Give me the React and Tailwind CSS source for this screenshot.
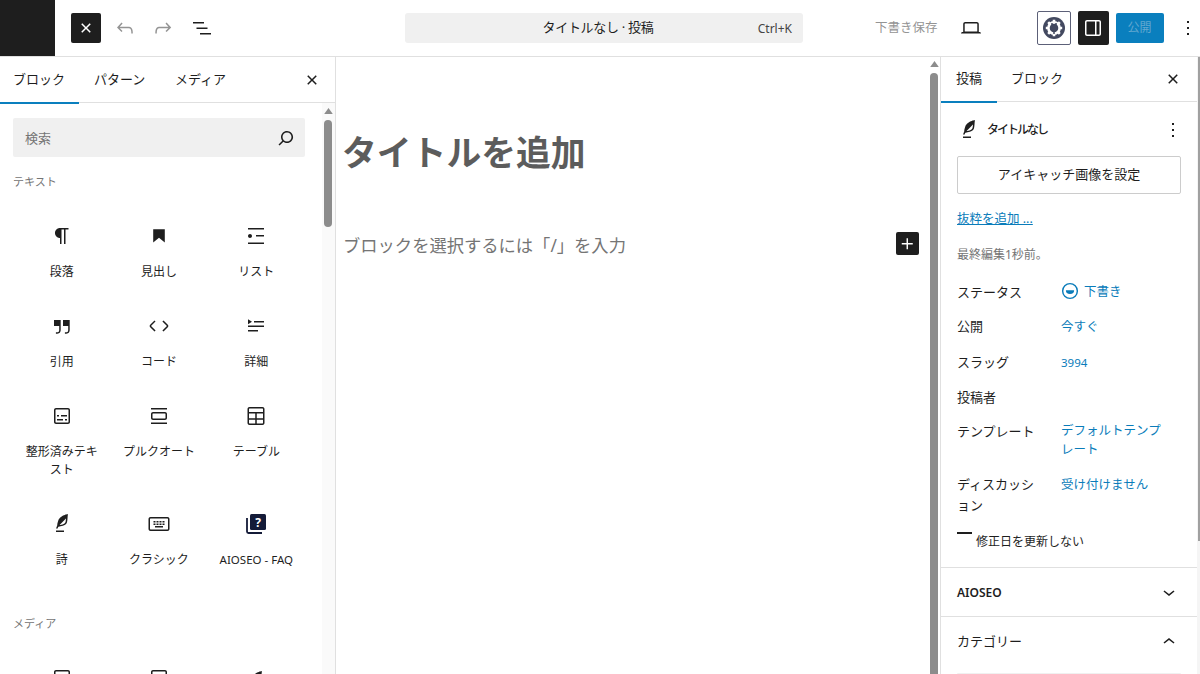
const P = {
  close: "M12 13.06l3.712 3.713 1.061-1.06L13.061 12l3.712-3.712-1.06-1.06L12 10.938 8.288 7.227l-1.061 1.06L10.939 12l-3.712 3.712 1.06 1.061L12 13.061z",
  undo: "M18.3 11.7c-.6-.6-1.4-.9-2.3-.9H6.7l2.9-3.3-1.1-1-4.5 5L8.5 16l1-1-2.7-2.7H16c.5 0 .9.2 1.3.5 1 1 1 3.4 1 4.5v.3h1.5v-.2c0-1.5 0-4.3-1.5-5.7z",
  redo: "M15.6 6.5l-1.1 1 2.9 3.3H8c-.9 0-1.7.3-2.3.9-1.4 1.5-1.4 4.2-1.4 5.6v.2h1.5v-.3c0-1.1 0-3.5 1-4.5.3-.3.7-.5 1.3-.5h9.2L14.5 15l1.1 1.1 4.6-4.6-4.6-5z",
  listView: "M3 6h11v1.5H3V6Zm3.5 5.5h11V13h-11v-1.5ZM21 17H10v1.5h11V17Z",
  search: "M13 5c-3.3 0-6 2.7-6 6 0 1.4.5 2.7 1.3 3.7l-3.8 3.8 1.1 1.1 3.8-3.8c1 .8 2.3 1.3 3.7 1.3 3.3 0 6-2.7 6-6S16.3 5 13 5zm0 10.5c-2.5 0-4.5-2-4.5-4.5s2-4.5 4.5-4.5 4.5 2 4.5 4.5-2 4.5-4.5 4.5z",
  paragraph: "m9.99609 14v-.2251l.00391.0001v6.225h1.5v-14.5h2.5v14.5h1.5v-14.5h3v-1.5h-8.50391c-2.76142 0-5 2.23858-5 5 0 2.7614 2.23858 5 5 5z",
  bookmark: "M6.2 5.2v13.4l5.8-4.8 5.8 4.8V5.2z",
  list: "M4 4v1.5h16V4H4zm8 8.5h8V11h-8v1.5zM4 20h16v-1.5H4V20zm4-8c0-1.1-.9-2-2-2s-2 .9-2 2 .9 2 2 2 2-.9 2-2z",
  quote: "M13 6v6h5.2v4c0 .8-.2 1.4-.5 1.7-.6.6-1.6.6-2.5.5h-.3v1.5h.5c1 0 2.3-.1 3.3-1 .6-.6 1-1.6 1-2.8V6H13zm-9 6h5.2v4c0 .8-.2 1.4-.5 1.7-.6.6-1.6.6-2.5.5h-.3v1.5h.5c1 0 2.3-.1 3.3-1 .6-.6 1-1.6 1-2.8V6H4v6z",
  code: "M20.8 10.7l-4.3-4.3-1.1 1.1 4.3 4.3c.1.1.1.3 0 .4l-4.3 4.3 1.1 1.1 4.3-4.3c.7-.8.7-1.9 0-2.6zM4.2 11.8l4.3-4.3-1-1-4.3 4.3c-.7.7-.7 1.8 0 2.5l4.3 4.3 1.1-1.1-4.3-4.3c-.2-.1-.2-.3-.1-.4z",
  details: "M4 16h10v1.5H4V16Zm0-4.5h16V13H4v-1.5ZM10 7h10v1.5H10V7Zm-6-1.75 4 2.5-4 2.5v-5Z",
  preformatted: "M18 4H6c-1.1 0-2 .9-2 2v12c0 1.1.9 2 2 2h12c1.1 0 2-.9 2-2V6c0-1.1-.9-2-2-2zm.5 14c0 .3-.2.5-.5.5H6c-.3 0-.5-.2-.5-.5V6c0-.3.2-.5.5-.5h12c.3 0 .5.2.5.5v12zM7 16.5h6V15H7v1.5zm4-4h6V11h-6v1.5zM9 11H7v1.5h2V11zm6 5.5h2V15h-2v1.5z",
  pullquote: "M18 8H6c-1.1 0-2 .9-2 2v4c0 1.1.9 2 2 2h12c1.1 0 2-.9 2-2v-4c0-1.1-.9-2-2-2zm.5 6c0 .3-.2.5-.5.5H6c-.3 0-.5-.2-.5-.5v-4c0-.3.2-.5.5-.5h12c.3 0 .5.2.5.5v4zM4 4v1.5h16V4H4zm0 16h16v-1.5H4V20z",
  table: "M18.5 3H5.5C4.4 3 3.5 3.9 3.5 5v14c0 1.1.9 2 2 2h13c1.1 0 2-.9 2-2V5c0-1.1-.9-2-2-2zM5 5c0-.3.2-.5.5-.5h13c.3 0 .5.2.5.5v3H5V5zm0 14v-3.2h6.25v3.7H5.5c-.3 0-.5-.2-.5-.5zm0-4.7V9.5h6.25v4.8H5zm14 4.7c0 .3-.2.5-.5.5h-5.75v-3.7H19V19zm0-4.7h-6.25V9.5H19v4.8z",
  verse: "M17.8 2l-.9.3c-.1 0-3.6 1-5.2 2.1C10 5.5 9.3 6.5 8.9 7.1c-.6.9-1.7 4.7-1.7 6.3l-.9 2.3c-.2.4 0 .8.4 1 .1 0 .2.1.3.1.3 0 .6-.2.7-.5l.6-1.5c.3 0 .7-.1 1.2-.2.7-.1 1.4-.3 2.2-.5.8-.2 1.6-.5 2.4-.8.7-.3 1.4-.7 1.9-1.2s.8-1.2 1-1.9c.2-.7.3-1.6.4-2.4.1-.8.1-1.7.2-2.5 0-.8.1-1.5.2-2.1V2zm-1.9 5.6c-.1.8-.2 1.5-.3 2.1-.2.6-.4 1-.6 1.3-.3.3-.8.6-1.4.9-.7.3-1.4.5-2.2.8-.6.2-1.3.3-1.8.4L15 7.5c.3-.3.6-.7 1-1.1 0 .4 0 .8-.1 1.2zM6 20h8v-1.5H6V20z",
  keyboard: "M16 15.5H8V14h8v1.5zM8.5 13h-2v-1.5h2V13zm3 0h-2v-1.5h2V13zm3 0h-2v-1.5h2V13zm3 0h-2v-1.5h2V13zm-9-2.5h-2V9h2v1.5zm3 0h-2V9h2v1.5zm3 0h-2V9h2v1.5zm3 0h-2V9h2v1.5zM3.5 6.5h17c.3 0 .5.2.5.5v10c0 .3-.2.5-.5.5h-17c-.3 0-.5-.2-.5-.5V7c0-.3.2-.5.5-.5zM3.5 5C2.4 5 1.5 5.9 1.5 7v10c0 1.1.9 2 2 2h17c1.1 0 2-.9 2-2V7c0-1.1-.9-2-2-2h-17z",
  sidebar: "M18 4H6c-1.1 0-2 .9-2 2v12c0 1.1.9 2 2 2h12c1.1 0 2-.9 2-2V6c0-1.1-.9-2-2-2zm-4 14.5H6c-.3 0-.5-.2-.5-.5V6c0-.3.2-.5.5-.5h8v13zm4.5-.5c0 .3-.2.5-.5.5h-2.5v-13H18c.3 0 .5.2.5.5v12z",
  laptop: "M20.5 16h-.7V8c0-1.1-.9-2-2-2H6.2c-1.1 0-2 .9-2 2v8h-.7c-.8 0-1.5.7-1.5 1.5h20c0-.8-.7-1.5-1.5-1.5zM5.7 8c0-.3.2-.5.5-.5h11.6c.3 0 .5.2.5.5v7.6H5.7V8z",
  more: "M13 19h-2v-2h2v2zm0-6h-2v-2h2v2zm0-6h-2V5h2v2z",
  plus: "M11 12.5V17.5H12.5V12.5H17.5V11H12.5V6H11V11H6V12.5H11Z",
  down: "M17.5 11.6L12 16l-5.5-4.4.9-1.2L12 14l4.5-3.6 1 1.2z",
  up: "M6.5 12.4L12 8l5.5 4.4-.9 1.2L12 10l-4.5 3.6-1-1.2z",
};

function Icon({ d, className = "w-6 h-6 fill-[#1e1e1e]" }) {
  return (
    <svg viewBox="0 0 24 24" className={className}>
      <path d={d} />
    </svg>
  );
}

function FaqIcon() {
  return (
    <svg viewBox="0 0 24 24" className="w-6 h-6">
      <path d="M3 6v13.5a1.5 1.5 0 0 0 1.5 1.5H18" fill="none" stroke="#141b38" strokeWidth="1.8" />
      <rect x="6" y="2" width="16" height="16" rx="1.5" fill="#141b38" />
      <text x="14" y="14.5" textAnchor="middle" fontSize="12" fontWeight="700" fill="#fff">?</text>
    </svg>
  );
}

function GearIcon() {
  return (
    <svg viewBox="0 0 24 24" className="w-6 h-6">
      <circle cx="12" cy="12" r="11" fill="#434960" />
      <circle cx="12" cy="12" r="5.6" fill="none" stroke="#fff" strokeWidth="2.6" />
      <path d="M12 3.8v3M12 17.2v3M3.8 12h3M17.2 12h3M6.2 6.2l2.1 2.1M15.7 15.7l2.1 2.1M17.8 6.2l-2.1 2.1M8.3 15.7l-2.1 2.1" stroke="#fff" strokeWidth="2.6" />
      <path d="M8.8 9.2h6.4v2.3a3.2 3.2 0 0 1-6.4 0z" fill="#434960" />
      <path d="M10 7v3M14 7v3M12 14v4" stroke="#434960" strokeWidth="1.5" />
    </svg>
  );
}

function StatusIcon() {
  return (
    <svg viewBox="0 0 24 24" className="w-[18px] h-[18px]">
      <circle cx="12" cy="12" r="9.8" fill="none" stroke="#0a7cba" strokeWidth="1.9" />
      <path d="M6.5 11h11a5.5 5 0 0 1-11 0z" fill="#0a7cba" />
    </svg>
  );
}

function Arrow() {
  return (
    <svg viewBox="0 0 10 7" className="w-[9px] h-[6px] fill-[#8c8c8c]">
      <path d="M5 0l5 7H0z" />
    </svg>
  );
}

const blockRows = [
  ["段落", <Icon d={P.paragraph} />],
  ["見出し", <Icon d={P.bookmark} />],
  ["リスト", <Icon d={P.list} />],
  ["引用", <Icon d={P.quote} />],
  ["コード", <Icon d={P.code} />],
  ["詳細", <Icon d={P.details} />],
  ["整形済みテキスト", <Icon d={P.preformatted} />],
  ["プルクオート", <Icon d={P.pullquote} />],
  ["テーブル", <Icon d={P.table} />],
  ["詩", <Icon d={P.verse} />],
  ["クラシック", <Icon d={P.keyboard} />],
  ["AIOSEO - FAQ", <FaqIcon />],
];

function Block({ label, icon }) {
  return (
    <div className="flex flex-col items-center">
      <div className="h-6">{icon}</div>
      <div className="mt-[15px] w-[78px] text-center text-[12px] leading-[18px] text-[#1e1e1e]">
        {label === "AIOSEO - FAQ" ? <span className="-mx-2 block whitespace-nowrap text-[11.5px]">{label}</span> : label}
      </div>
    </div>
  );
}

function Row({ label, value, mt, icon, valueClass = "text-[12.5px] pt-[1px]" }) {
  return (
    <div className={`flex ${mt}`}>
      <div className="w-[104px] shrink-0 pr-4 text-[13px] leading-[21px] text-[#1e1e1e]">{label}</div>
      {value && (
        <div className={`flex flex-1 items-start gap-[5px] pr-[16px] leading-[19px] text-[#0a7cba] ${valueClass}`}>
          {icon}
          <span>{value}</span>
        </div>
      )}
    </div>
  );
}

export default function App() {
  return (
    <div className="flex h-[674px] w-[1200px] flex-col overflow-hidden bg-white font-['Noto_Sans','Noto_Sans_CJK_JP',sans-serif] text-[#1e1e1e]">
      <header className="flex h-[57px] shrink-0 items-center border-b border-[#e0e0e0]">
        <div className="flex w-[405px] shrink-0 items-center">
          <div className="h-[56px] w-[55px] bg-[#1e1e1e]" />
          <div className="ml-[16px] flex h-[30px] w-[30px] items-center justify-center rounded-[2px] bg-[#1e1e1e]">
            <Icon d={P.close} className="h-6 w-6 fill-white" />
          </div>
          <Icon d={P.undo} className="ml-[12px] h-6 w-6 fill-[#949494]" />
          <Icon d={P.redo} className="ml-[14px] h-6 w-6 fill-[#949494]" />
          <Icon d={P.listView} className="ml-[15px] h-6 w-6 fill-[#1e1e1e]" />
        </div>
        <div className="relative flex h-[30px] w-[398px] shrink-0 items-center justify-center rounded-[3px] bg-[#f0f0f0] pr-[12px] text-[13px] tracking-[-0.3px]">
          <span>タイトルなし · 投稿</span>
          <span className="absolute right-[11px] top-[7px] text-[12px] leading-[18px] tracking-normal text-[#444]">Ctrl+K</span>
        </div>
        <div className="flex flex-1 items-center">
          <span className="ml-[72px] text-[12.5px] text-[#949494]">下書き保存</span>
          <Icon d={P.laptop} className="ml-[21px] h-6 w-6 fill-[#1e1e1e]" />
          <div className="ml-[54px] flex h-[34px] w-[34px] items-center justify-center rounded-[2px] border border-[#5c6078] bg-white">
            <GearIcon />
          </div>
          <div className="ml-[7px] flex h-[34px] w-[31px] items-center justify-center rounded-[2px] bg-[#1e1e1e]">
            <Icon d={P.sidebar} className="h-6 w-6 fill-white" />
          </div>
          <div className="ml-[7px] flex h-[30px] w-[48px] items-center justify-center rounded-[2px] bg-[#0a7fbe] text-[12px] text-[#63a8d0]">公開</div>
          <Icon d={P.more} className="ml-[12px] h-6 w-6 fill-[#1e1e1e]" />
        </div>
      </header>

      <div className="flex min-h-0 flex-1">
        <aside className="flex w-[336px] shrink-0 flex-col border-r border-[#e0e0e0]">
          <div className="flex h-[46px] shrink-0 items-center border-b border-[#e0e0e0] text-[13px]">
            <div className="relative flex h-[46px] w-[78px] items-center justify-center after:absolute after:bottom-[-1px] after:left-0 after:h-[2px] after:w-[79px] after:bg-[#0a7fbe]">ブロック</div>
            <div className="ml-[16px] w-[52px]">パターン</div>
            <div className="ml-[29px] w-[52px]">メディア</div>
            <Icon d={P.close} className="ml-[73px] h-6 w-6 fill-[#1e1e1e]" />
          </div>
          <div className="flex min-h-0 flex-1">
            <div className="min-w-0 flex-1 overflow-hidden pl-[13px] pr-[17px] pt-[15px]">
              <div className="flex h-[39px] items-center justify-between rounded-[2px] bg-[#f0f0f0] pl-[12px] pr-[7px]">
                <span className="pt-[2px] text-[13px] text-[#757575]">検索</span>
                <Icon d={P.search} className="h-6 w-6 fill-[#1e1e1e]" />
              </div>
              <div className="mt-[16px] text-[11px] leading-[18px] text-[#757575]">テキスト</div>
              <div className="mt-[33px] grid grid-cols-3 gap-y-[33px]">
                {blockRows.map(([l, i]) => (
                  <Block key={l} label={l} icon={i} />
                ))}
              </div>
              <div className="mt-[46px] text-[11px] leading-[18px] text-[#757575]">メディア</div>
              <div className="mt-[33px] grid grid-cols-3">
                <div className="flex justify-center"><Icon d={P.preformatted} /></div>
                <div className="flex justify-center"><Icon d={P.preformatted} /></div>
                <div className="flex justify-center pt-[3px]"><Icon d={P.verse} /></div>
              </div>
            </div>
            <div className="flex w-[13px] shrink-0 flex-col items-center bg-[#fafafa] pr-[1px] pt-[5px]">
              <Arrow />
              <div className="mt-[6px] h-[107px] w-[8px] rounded-full bg-[#8c8c8c]" />
            </div>
          </div>
        </aside>

        <main className="flex min-w-0 flex-1">
          <div className="min-w-0 flex-1 pl-[7px] pr-[9px] pt-[71px]">
            <h1 className="-ml-[1px] text-[34.8px] font-bold leading-[50px] text-[#5c5c5c]">タイトルを追加</h1>
            <div className="mt-[55px] flex items-start justify-between">
              <p className="text-[17.3px] leading-[26px] text-[#757575]">ブロックを選択するには「/」を入力</p>
              <div className="-mt-[1px] flex h-[23px] w-[23px] items-center justify-center rounded-[2px] bg-[#1e1e1e]">
                <Icon d={P.plus} className="h-6 w-6 fill-white" />
              </div>
            </div>
          </div>
          <div className="flex w-[12px] shrink-0 flex-col items-center pt-[4px]">
            <Arrow />
            <div className="mt-[6px] w-[8px] flex-1 rounded-t-full bg-[#8c8c8c]" />
          </div>
        </main>

        <aside className="flex w-[257px] shrink-0 flex-col border-l border-[#e0e0e0]">
          <div className="flex h-[45px] shrink-0 items-center border-b border-[#e0e0e0] text-[13px]">
            <div className="relative flex h-[45px] w-[56px] items-center justify-center after:absolute after:bottom-[-1px] after:left-0 after:h-[2px] after:w-full after:bg-[#0a7fbe]">投稿</div>
            <div className="ml-[14px] w-[52px]">ブロック</div>
            <Icon d={P.close} className="ml-[98px] h-6 w-6 fill-[#1e1e1e]" />
          </div>
          <div className="px-[16px]">
            <div className="mt-[16px] flex h-[24px] items-center">
              <Icon d={P.verse} className="h-6 w-6 fill-[#1e1e1e]" />
              <span className="ml-[6px] text-[12px] font-medium tracking-[-2px]">タイトルなし</span>
              <Icon d={P.more} className="ml-auto -mr-[4px] h-6 w-6 fill-[#1e1e1e]" />
            </div>
            <div className="mt-[14px] flex h-[38px] w-[224px] items-center justify-center rounded-[2px] border border-[#cccccc] text-[13px]">アイキャッチ画像を設定</div>
            <div className="mt-[16px] text-[12.5px] leading-[18px] text-[#0a7cba] underline">抜粋を追加 ...</div>
            <div className="mt-[18px] text-[12px] leading-[18px] text-[#757575]">最終編集1秒前。</div>
            <Row mt="mt-[18px]" label="ステータス" value="下書き" icon={<StatusIcon />} valueClass="text-[12.5px]" />
            <Row mt="mt-[13px]" label="公開" value="今すぐ" />
            <Row mt="mt-[15px]" label="スラッグ" value="3994" valueClass="text-[11.5px] pt-[1px]" />
            <Row mt="mt-[14px]" label="投稿者" />
            <Row mt="mt-[13px]" label="テンプレート" value="デフォルトテンプレート" valueClass="text-[12.5px]" />
            <Row mt="mt-[15px]" label="ディスカッション" value="受け付けません" />
            <div className="mt-[14px] flex">
              <div className="mt-[2px] h-[2px] w-[15px] bg-[#1e1e1e]" />
              <span className="ml-[4px] mt-[3px] text-[12px] leading-[18px]">修正日を更新しない</span>
            </div>
          </div>
          <div className="mt-[16px] flex h-[50px] shrink-0 items-center justify-between border-y border-[#e0e0e0] px-[16px]">
            <span className="pt-[1px] text-[12px] font-semibold">AIOSEO</span>
            <Icon d={P.down} className="h-6 w-6 fill-[#1e1e1e]" />
          </div>
          <div className="flex h-[50px] shrink-0 items-center justify-between px-[16px]">
            <span className="text-[13px]">カテゴリー</span>
            <Icon d={P.up} className="h-6 w-6 fill-[#1e1e1e]" />
          </div>
          <div className="mx-[16px] mt-[6px] h-[10px] rounded-t-[2px] bg-[#f0f0f0]" />
        </aside>

        <div className="flex w-[3px] shrink-0 flex-col bg-[#f5f5f5]">
          <div className="ml-[1px] h-[484px] w-[2px] bg-[#a0a0a0]" />
        </div>
      </div>
    </div>
  );
}
